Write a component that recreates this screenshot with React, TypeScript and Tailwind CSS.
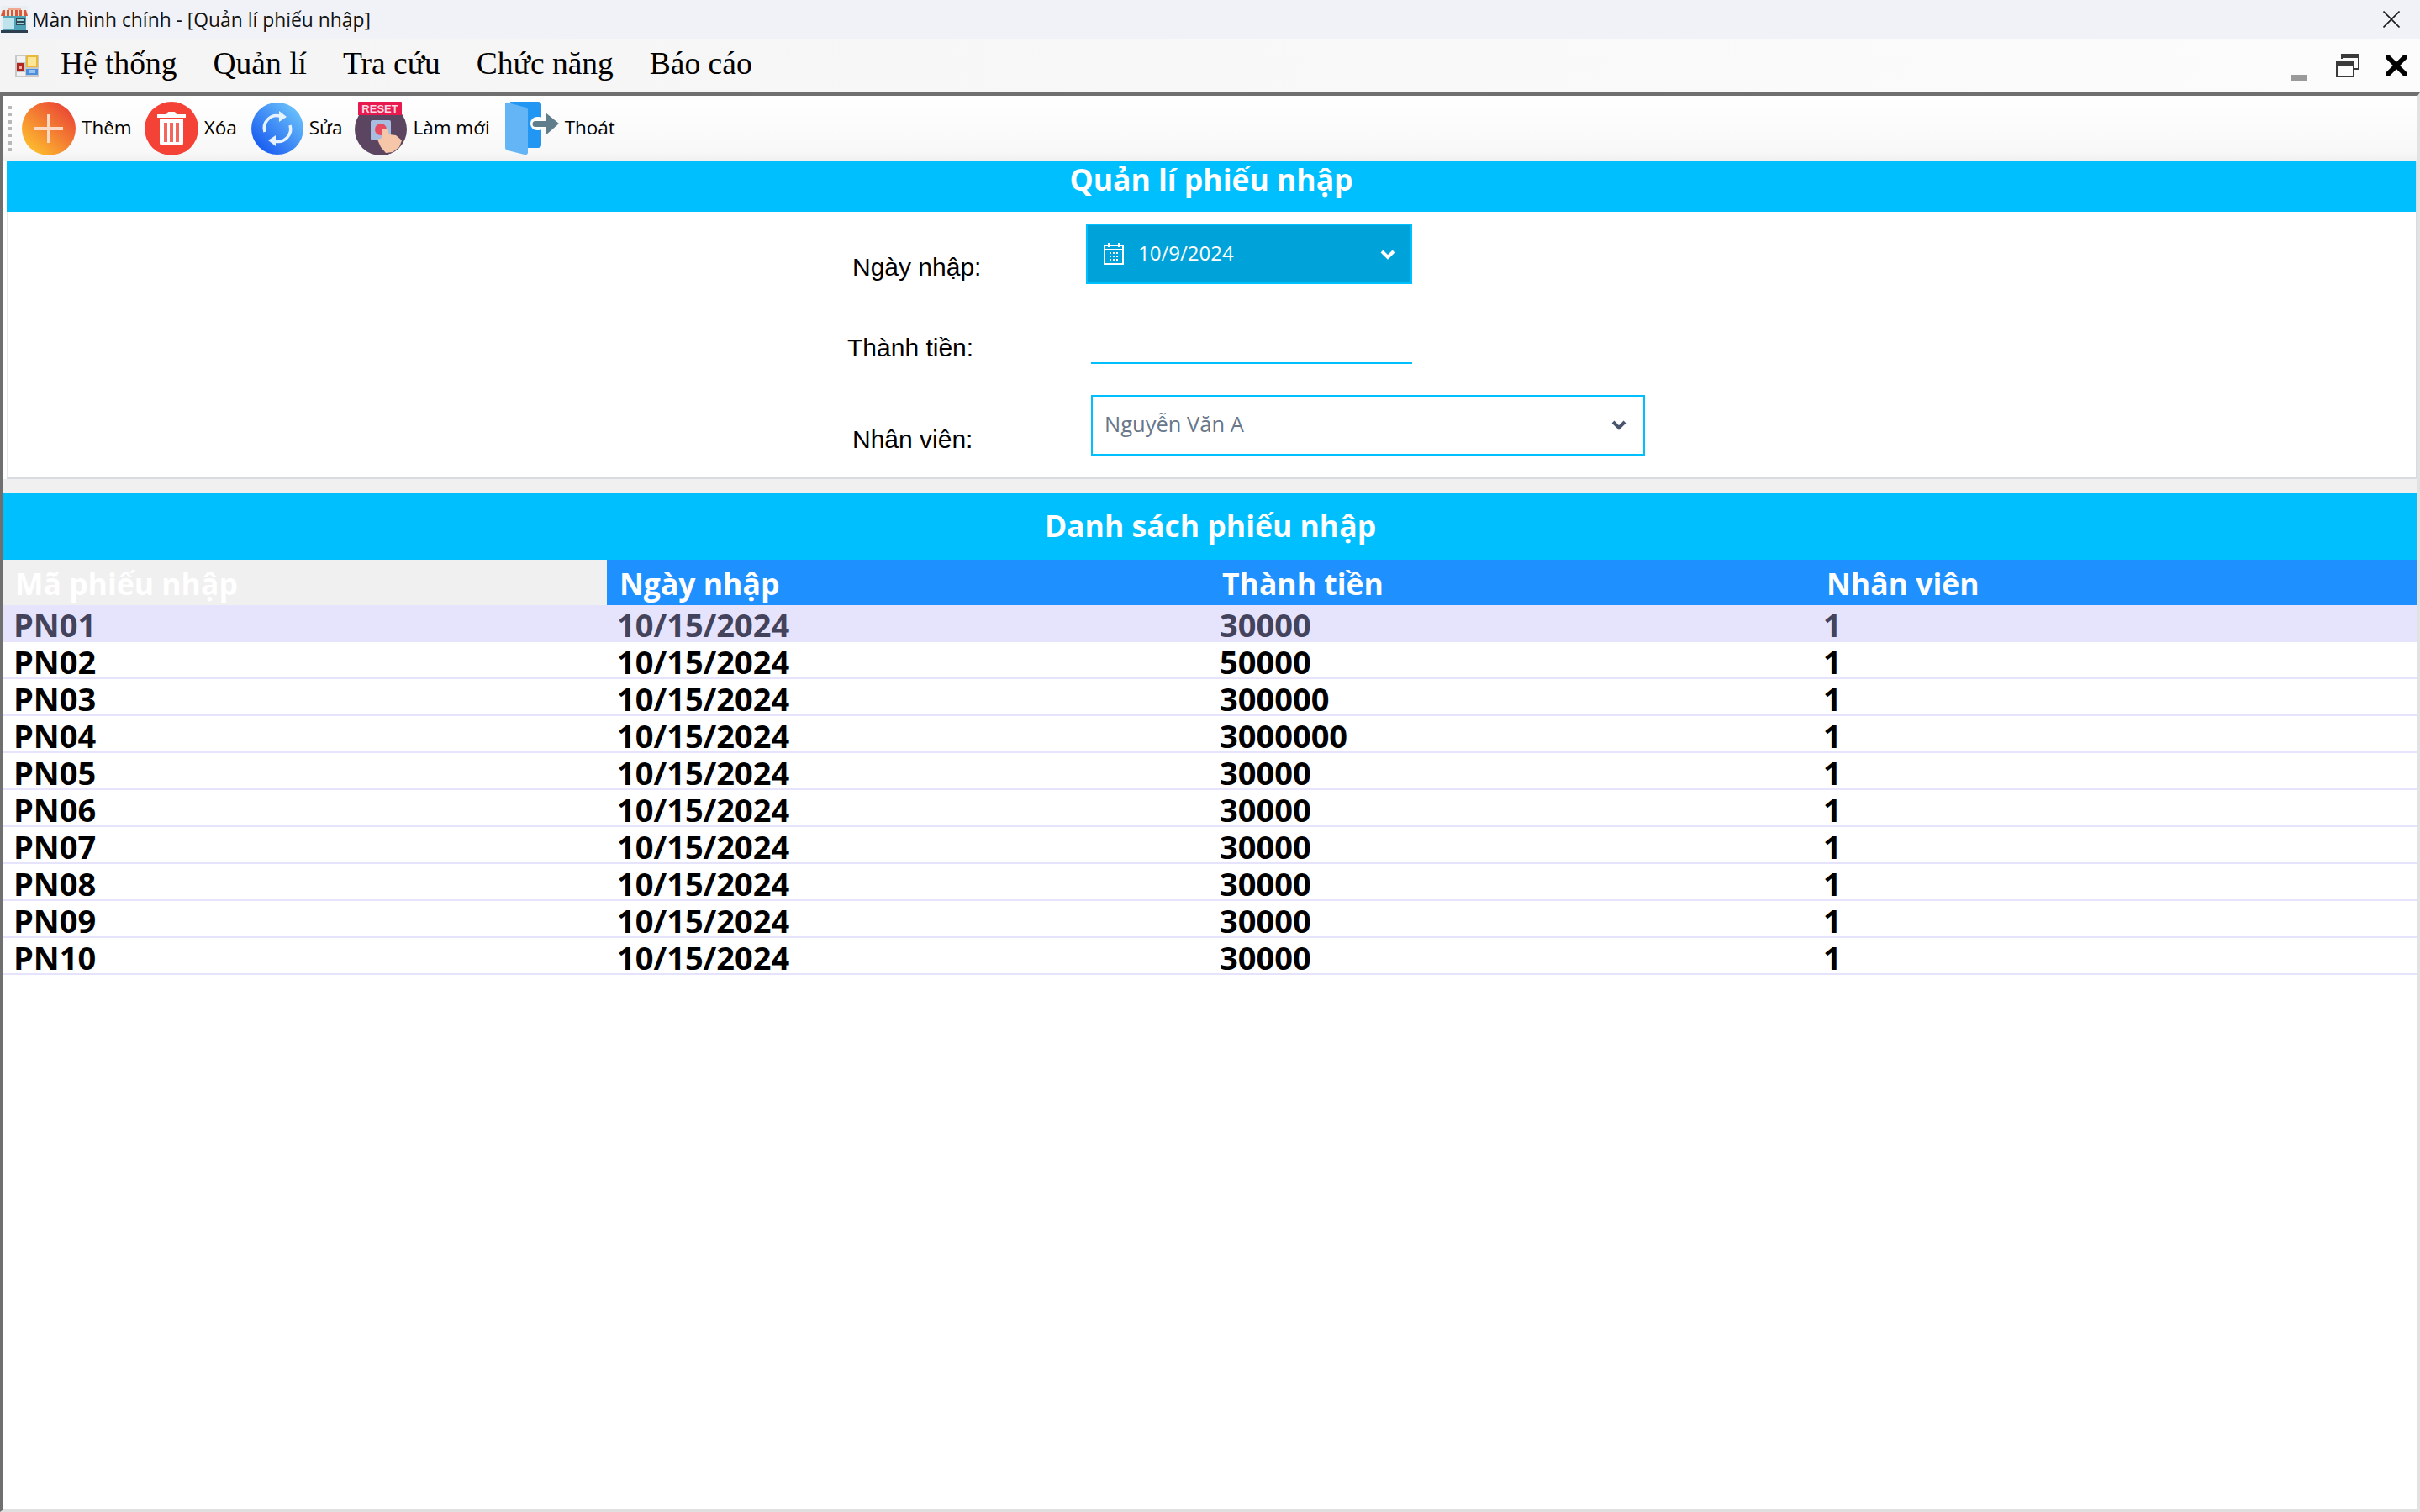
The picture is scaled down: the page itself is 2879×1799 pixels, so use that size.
import React from "react";

const rows = [
  ["PN01", "10/15/2024", "30000", "1"],
  ["PN02", "10/15/2024", "50000", "1"],
  ["PN03", "10/15/2024", "300000", "1"],
  ["PN04", "10/15/2024", "3000000", "1"],
  ["PN05", "10/15/2024", "30000", "1"],
  ["PN06", "10/15/2024", "30000", "1"],
  ["PN07", "10/15/2024", "30000", "1"],
  ["PN08", "10/15/2024", "30000", "1"],
  ["PN09", "10/15/2024", "30000", "1"],
  ["PN10", "10/15/2024", "30000", "1"],
];

const StoreIcon = () => (
  <svg width="34" height="32" viewBox="0 0 34 32" className="shrink-0">
    <rect x="1" y="0" width="32" height="30" fill="#e8eef2" />
    <rect x="1" y="29" width="32" height="3" fill="#2c3e50" />
    <rect x="3" y="12" width="28" height="17" fill="#4fa3b8" />
    <rect x="4" y="14" width="13" height="14" fill="#bfe3ec" />
    <rect x="19" y="14" width="11" height="9" fill="#2f4858" />
    <rect x="20" y="16" width="9" height="2" fill="#9fd3d8" />
    <rect x="20" y="20" width="9" height="1" fill="#9fd3d8" />
    <path d="M3 5h28l2 7H1z" fill="#d9573f" />
    <path d="M7 5v7M12 5v7M17 5v7M22 5v7M27 5v7" stroke="#f5e3d0" strokeWidth="2" />
    <rect x="9" y="2" width="16" height="3" fill="#f0a890" />
  </svg>
);

const MenuIcon = () => (
  <svg width="28" height="28" viewBox="0 0 28 28" className="shrink-0">
    <rect x="0" y="1" width="28" height="27" fill="#c9c9c9" />
    <rect x="2" y="3" width="10" height="7" fill="#f2f2f2" />
    <rect x="2" y="11" width="9" height="10" fill="#b3261e" />
    <rect x="5" y="14" width="3" height="4" fill="#f3b0a8" />
    <rect x="2" y="22" width="10" height="4" fill="#f2f2f2" />
    <rect x="13" y="2" width="14" height="14" fill="#e8b93a" />
    <rect x="15" y="4" width="10" height="10" fill="#fbe69a" />
    <rect x="13" y="18" width="14" height="7" fill="#4d8fdc" />
    <rect x="16" y="19" width="8" height="4" fill="#9cc4f0" />
  </svg>
);

const PlusIcon = () => (
  <svg width="64" height="64" viewBox="0 0 64 64" className="shrink-0">
    <defs>
      <linearGradient id="plusG" x1="0.1" y1="1" x2="0.9" y2="0.1">
        <stop offset="0" stopColor="#ffc82e" />
        <stop offset="1" stopColor="#ea4335" />
      </linearGradient>
    </defs>
    <circle cx="32" cy="32" r="32" fill="url(#plusG)" />
    <path d="M32 15v34M15 32h34" stroke="#fbd9c4" strokeWidth="4" />
  </svg>
);

const TrashIcon = () => (
  <svg width="64" height="64" viewBox="0 0 64 64" className="shrink-0">
    <circle cx="32" cy="32" r="32" fill="#f44336" />
    <path d="M15 15h34v4H15z" fill="#fff" />
    <path d="M26 15l2-3h8l2 3z" fill="#fff" />
    <path d="M18 21h28v28a3 3 0 0 1-3 3H21a3 3 0 0 1-3-3z" fill="#fff" />
    <path d="M23 25h4v23h-4zM30 25h4v23h-4zM37 25h4v23h-4z" fill="#f4665c" />
  </svg>
);

const RefreshIcon = () => (
  <svg width="62" height="64" viewBox="0 0 62 64" className="shrink-0">
    <defs>
      <linearGradient id="refG" x1="0.1" y1="0.9" x2="0.9" y2="0.1">
        <stop offset="0" stopColor="#1658f0" />
        <stop offset="1" stopColor="#6cc4fb" />
      </linearGradient>
    </defs>
    <circle cx="31" cy="32" r="31" fill="url(#refG)" />
    <path d="M16 36a15 15 0 0 1 18-19" fill="none" stroke="#e6f2ff" strokeWidth="3.5" />
    <path d="M46 28a15 15 0 0 1-18 19" fill="none" stroke="#e6f2ff" strokeWidth="3.5" />
    <path d="M33 11l9 7-9 6z" fill="#e6f2ff" />
    <path d="M29 53l-9-7 9-6z" fill="#e6f2ff" />
  </svg>
);

const ResetIcon = () => (
  <svg width="62" height="64" viewBox="0 0 62 64" className="shrink-0">
    <circle cx="31" cy="33" r="31" fill="#5b4560" />
    <path d="M4 1a1 1 0 0 1 1-1h50a1 1 0 0 1 1 1v15H4z" fill="#e8194f" />
    <text x="30" y="13" textAnchor="middle" fontSize="13" fontWeight="700" fontFamily="'Liberation Sans', sans-serif" fill="#ffd9e2">RESET</text>
    <rect x="19" y="22" width="24" height="24" rx="2" fill="#a9bde0" />
    <circle cx="31" cy="33" r="7" fill="#e84a5f" />
    <path d="M33 33l5-1 3 7 8 1 7 6-3 8-8 6-8 1-6-7-4-9 6-2z" fill="#f6c6a8" />
  </svg>
);

const ExitIcon = () => (
  <svg width="64" height="64" viewBox="0 0 64 64" className="shrink-0">
    <path d="M6 0h33a4 4 0 0 1 4 4v47a4 4 0 0 1-4 4H20z" fill="#2196f3" />
    <path d="M0 3a2 2 0 0 1 3-2l22 6a3 3 0 0 1 2 3v51a3 3 0 0 1-4 2L3 58a4 4 0 0 1-3-4z" fill="#64b5f6" />
    <rect x="30" y="18" width="18" height="16" rx="8" fill="#fff" />
    <path d="M36 23h12V13l16 13-16 14V30H36a3.500 3.500 0 0 1 0-7z" fill="#607d8b" />
  </svg>
);

const CalendarIcon = () => (
  <svg width="24" height="26" viewBox="0 0 24 26" className="shrink-0">
    <rect x="1" y="3" width="22" height="22" fill="none" stroke="#fff" strokeWidth="2" />
    <path d="M1 8h22" stroke="#fff" strokeWidth="2" />
    <path d="M6 0v5M18 0v5" stroke="#fff" strokeWidth="2" />
    <path d="M7 12h2M11 12h2M15 12h2M7 16h2M11 16h2M15 16h2M7 20h2M11 20h2M15 20h2" stroke="#fff" strokeWidth="2" />
  </svg>
);

const Chevron = ({ color }: { color: string }) => (
  <svg width="18" height="14" viewBox="0 0 18 14" className="shrink-0">
    <path d="M2 3l7 7 7-7" fill="none" stroke={color} strokeWidth="4" />
  </svg>
);

const ToolItem = ({ icon, label, gapAfter }: { icon: React.ReactNode; label: string; gapAfter: string }) => (
  <div className={`flex items-center gap-[7px] ${gapAfter}`}>
    {icon}
    <span className="-translate-y-px text-[22.5px] leading-none text-black">{label}</span>
  </div>
);

export default function App() {
  return (
    <div className="flex h-[1799px] w-[2879px] flex-col overflow-hidden bg-white font-['Open_Sans',sans-serif]">
      {/* title bar */}
      <div className="flex h-[46px] items-center justify-between bg-[#f0f2f8] pr-[24px]">
        <div className="flex items-center gap-[4px]">
          <StoreIcon />
          <span className="mt-[2px] text-[22.85px] leading-none text-[#111]">Màn hình chính - [Quản lí phiếu nhập]</span>
        </div>
        <svg width="20" height="20" viewBox="0 0 20 20">
          <path d="M0.5 0.5l19 19M19.5 0.5l-19 19" stroke="#1a1a1a" strokeWidth="1.6" />
        </svg>
      </div>

      {/* menu bar */}
      <div className="flex h-[64px] items-center justify-between bg-[linear-gradient(to_right,#f4f4f4,#fcfcfc)] pl-[18px] pr-[15px]">
        <div className="flex items-center">
          <MenuIcon />
          <nav className="mb-[4px] ml-[26px] flex items-center gap-[43px] font-['Liberation_Serif',serif] text-[37.5px] leading-none text-black">
            <span>Hệ thống</span>
            <span>Quản lí</span>
            <span>Tra cứu</span>
            <span>Chức năng</span>
            <span>Báo cáo</span>
          </nav>
        </div>
        <div className="flex items-center">
          <div className="mt-[28px] h-[7px] w-[19px] bg-[#9a9a9a]" />
          <svg width="28" height="28" viewBox="0 0 28 28" className="ml-[34px]">
            <path d="M7 6V1h20v17h-5" fill="none" stroke="#3a3a3a" strokeWidth="2" />
            <rect x="6" y="1" width="21" height="4" fill="#3a3a3a" />
            <rect x="1" y="10" width="20" height="17" fill="none" stroke="#3a3a3a" strokeWidth="2" />
            <rect x="1" y="10" width="20" height="5" fill="#3a3a3a" />
          </svg>
          <svg width="26" height="26" viewBox="0 0 26 26" className="ml-[31px]">
            <path d="M3 3l20 20M23 3L3 23" stroke="#000" strokeWidth="6" strokeLinecap="square" />
          </svg>
        </div>
      </div>

      {/* body */}
      <div className="flex flex-1 flex-col border-b-[3px] border-l-4 border-r-[3px] border-t-4 border-b-[#e0e0e0] border-l-[#6f6f6f] border-r-[#e2e2e2] border-t-[#707070]">
        {/* toolbar */}
        <div className="flex h-[78px] items-center bg-[linear-gradient(to_bottom,#ffffff,#f8f8f8_85%,#f0f0f0)] pl-[6px]">
          <div className="mr-[12px] flex h-[54px] w-[4px] flex-col justify-between">
            {[0, 1, 2, 3, 4, 5, 6].map((i) => (
              <div key={i} className="h-[4px] w-[4px] bg-[#b8b8b8]" />
            ))}
          </div>
          <ToolItem icon={<PlusIcon />} label="Thêm" gapAfter="mr-[15px]" />
          <ToolItem icon={<TrashIcon />} label="Xóa" gapAfter="mr-[17px]" />
          <ToolItem icon={<RefreshIcon />} label="Sửa" gapAfter="mr-[15px]" />
          <ToolItem icon={<ResetIcon />} label="Làm mới" gapAfter="mr-[18px]" />
          <ToolItem icon={<ExitIcon />} label="Thoát" gapAfter="" />
        </div>

        {/* form panel */}
        <div className="ml-[4px] flex h-[378px] flex-col border-b-2 border-r-2 border-b-[#d8dce0] border-r-[#d8dce0] bg-white">
          <div className="flex h-[60px] justify-center bg-[#00bfff]">
            <span className="text-[35.5px] font-bold leading-[42px] text-white">Quản lí phiếu nhập</span>
          </div>
          <div className="flex flex-1 flex-col border-l-2 border-l-[#e8e8e8] pl-[992px]">
            <div className="mt-[14px] flex h-[72px]">
              <span className="ml-[12px] mt-[32px] w-[278px] font-['Liberation_Sans',sans-serif] text-[30px] leading-[40px] text-black">Ngày nhập:</span>
              <div className="flex h-[72px] w-[388px] items-center bg-[#00a3d9] pl-[21px] pr-[20px] outline outline-2 -outline-offset-2 outline-[#00bfff]">
                <CalendarIcon />
                <span className="mb-[2px] ml-[17px] text-[24px] leading-none text-white">10/9/2024</span>
                <div className="ml-auto mt-[2px]">
                  <Chevron color="#ffffff" />
                </div>
              </div>
            </div>
            <div className="mt-[46px] flex h-[49px]">
              <span className="ml-[6px] mt-[10px] w-[290px] font-['Liberation_Sans',sans-serif] text-[30px] leading-[40px] text-black">Thành tiền:</span>
              <div className="h-[49px] w-[382px] border-b-2 border-b-[#00bfff]" />
            </div>
            <div className="mt-[37px] flex h-[72px]">
              <span className="ml-[12px] mt-[33px] w-[284px] font-['Liberation_Sans',sans-serif] text-[30px] leading-[40px] text-black">Nhân viên:</span>
              <div className="flex h-[72px] w-[659px] items-center border-2 border-[#00bfff] bg-white pl-[14px] pr-[20px]">
                <span className="mb-[2px] text-[25.5px] leading-none text-[#68778a]">Nguyễn Văn A</span>
                <div className="ml-auto">
                  <Chevron color="#47566e" />
                </div>
              </div>
            </div>
          </div>
        </div>

        <div className="h-[16px] bg-[#f0f0f0]" />

        {/* list */}
        <div className="flex h-[80px] items-center justify-center bg-[#00bfff]">
          <span className="text-[35.5px] font-bold leading-none text-white">Danh sách phiếu nhập</span>
        </div>
        <div className="grid h-[54px] grid-cols-[718px_718px_720px_1fr] text-[35.5px] font-bold leading-[56px] text-white">
          <div className="bg-[#f0f0f0] pl-[14px]">Mã phiếu nhập</div>
          <div className="bg-[#1e90ff] pl-[15px]">Ngày nhập</div>
          <div className="bg-[#1e90ff] pl-[14px]">Thành tiền</div>
          <div className="bg-[#1e90ff] pl-[13px]">Nhân viên</div>
        </div>
        {rows.map((r, i) => (
          <div
            key={r[0]}
            className={`grid h-[44px] grid-cols-[718px_718px_720px_1fr] text-[38px] font-bold leading-[44px] ${
              i === 0 ? "bg-[#e6e4fd] text-[#44435c]" : "border-b-2 border-b-[#e6e4fd] bg-white text-black"
            }`}
          >
            <div className="translate-y-px pl-[12px]">{r[0]}</div>
            <div className="translate-y-px pl-[12px]">{r[1]}</div>
            <div className="translate-y-px pl-[11px]">{r[2]}</div>
            <div className="translate-y-px pl-[9px]">{r[3]}</div>
          </div>
        ))}
      </div>
    </div>
  );
}
